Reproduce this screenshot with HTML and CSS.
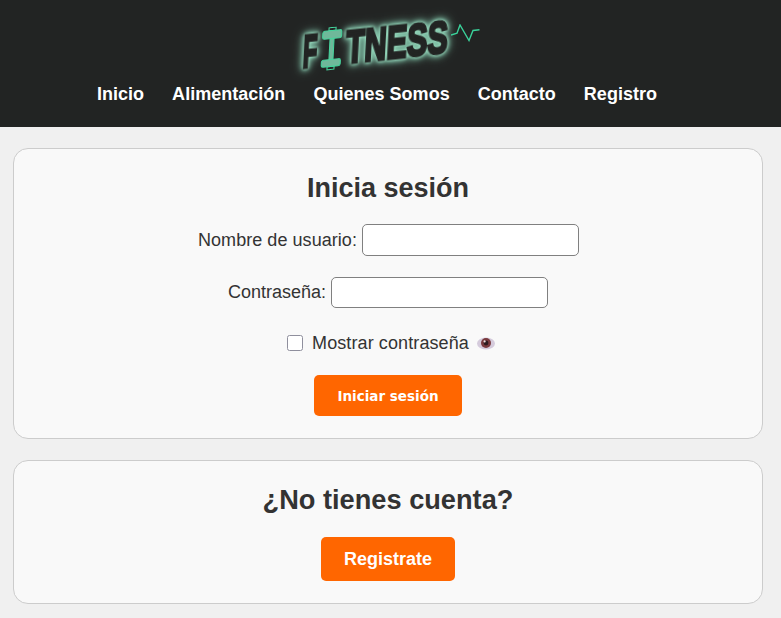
FILE: index.html
```
<!DOCTYPE html>
<html lang="es">
<head>
<meta charset="utf-8">
<title>Fitness</title>
<link rel="stylesheet" href="styles.css">
</head>
<body>
<header class="site-header">
  <div class="logo">
    <div class="logo-word">
      <div class="logo-letters">
        <span class="logo-f">F</span>
        <span class="logo-rest">TNESS</span>
      </div>
      <svg class="dumbbell" width="21" height="44" viewBox="0 0 21 44" fill="none" stroke="#45d39c" stroke-width="1.100">
        <path d="M7 .6h7v3H7z"/>
        <path d="M3 3.600h15a2 2 0 0 1 2 2v4a2 2 0 0 1-2 2H3a2 2 0 0 1-2-2v-4a2 2 0 0 1 2-2z" fill="#6fb89a"/>
        <path d="M8.500 11.600h4v21h-4z" fill="#6fb89a"/>
        <path d="M3 32.600h15a2 2 0 0 1 2 2v3a2 2 0 0 1-2 2H3a2 2 0 0 1-2-2v-3a2 2 0 0 1 2-2z" fill="#6fb89a"/>
        <path d="M7 39.600h7v3H7z"/>
      </svg>
    </div>
    <svg class="pulse" width="29" height="18" viewBox="0 0 29 18" fill="none" stroke="#3ad29a" stroke-width="1.400">
      <path d="M0 11l6-1.800L9 1l9 15.500 4-10 6.500-.7"/>
    </svg>
  </div>
  <nav class="nav">
    <a href="#">Inicio</a>
    <a href="#">Alimentación</a>
    <a href="#">Quienes Somos</a>
    <a href="#">Contacto</a>
    <a href="#">Registro</a>
  </nav>
</header>
<main class="content">
  <section class="card card-login">
    <h2>Inicia sesión</h2>
    <form class="form">
      <div class="field field-user"><label for="u">Nombre de usuario:</label><input id="u" type="text"></div>
      <div class="field field-pass"><label for="p">Contraseña:</label><input id="p" type="password"></div>
      <div class="show"><input id="s" type="checkbox"><label for="s">Mostrar contraseña</label>
        <svg class="eye" width="18" height="13" viewBox="0 0 18 13">
          <ellipse cx="9" cy="6.500" rx="9" ry="6" fill="#d5cbdc"/>
          <circle cx="9" cy="6" r="5" fill="#7a3a3e"/>
          <circle cx="9" cy="6" r="2.400" fill="#2e1b20"/>
          <circle cx="7.600" cy="4.400" r="1.100" fill="#eddfe0"/>
        </svg>
      </div>
      <button class="btn btn-login" type="button">Iniciar sesión</button>
    </form>
  </section>
  <section class="card card-register">
    <h2>¿No tienes cuenta?</h2>
    <a class="btn btn-register" href="#">Registrate</a>
  </section>
</main>
</body>
</html>
```
FILE: styles.css
```
* { box-sizing: border-box; }
html, body { margin: 0; padding: 0; }
body {
  background: #f0f0f0;
  color: #333;
  font-family: "Liberation Sans", Arial, sans-serif;
  height: 618px;
  overflow: hidden;
}
.site-header {
  background: #222423;
  height: 127px;
  display: flex;
  flex-direction: column;
  align-items: center;
}
.logo {
  position: relative;
  width: 190px;
  height: 72px;
  flex: none;
}
.logo-word {
  position: absolute;
  left: 7px;
  top: 22px;
  width: 150px;
  height: 44px;
  transform: skew(-3deg, -6deg);
}
.logo-letters {
  display: flex;
  align-items: center;
  height: 44px;
  color: #222423;
  font-weight: 700;
  font-size: 47px;
  line-height: 44px;
  filter: drop-shadow(0 0 1.500px #9fe0c4) drop-shadow(0 0 2.500px #8fd6b8) drop-shadow(0 0 4px #6fa892);
}
.logo-f, .logo-rest {
  display: inline-block;
  transform-origin: left center;
  -webkit-text-stroke: 3px #222423;
}
.logo-f { width: 43px; transform: scaleX(.5); }
.logo-rest { width: 106px; transform: scaleX(.65); }
.dumbbell { position: absolute; left: 18px; top: 0; }
.pulse { position: absolute; left: 155px; top: 24px; }
.nav {
  display: flex;
  gap: 28px;
  margin-top: 12px;
  margin-left: -27px;
}
.nav a {
  color: #fff;
  text-decoration: none;
  font-weight: 700;
  font-size: 18px;
  line-height: 21px;
  letter-spacing: .02px;
}
.content {
  padding: 21px 18px 0 13px;
  display: flex;
  flex-direction: column;
  gap: 21px;
}
.card {
  background: #f9f9f9;
  border: 1px solid #ccc;
  border-radius: 15px;
  text-align: center;
}
.card-login { height: 291px; padding-top: 24px; }
.card-register { height: 144px; padding-top: 23px; }
h2 { margin: 0; font-weight: 700; color: #333; }
.card-login h2 { font-size: 27px; line-height: 31px; }
.card-register h2 { font-size: 27.200px; line-height: 31px; }
.form { display: flex; flex-direction: column; align-items: center; }
.field { display: flex; align-items: center; gap: 5px; font-size: 18px; height: 32px; }
.field-user { margin-top: 20px; margin-left: 1px; letter-spacing: .05px; }
.field-pass { margin-top: 20px; }
.field input {
  width: 217px;
  height: 32px;
  border: 1px solid #808080;
  border-radius: 5px;
  background: #fff;
  padding: 0 5px;
}
.field-pass input { height: 31px; }
.show { display: flex; align-items: center; font-size: 18px; margin: 24px 0 0 6px; height: 22px; letter-spacing: .1px; }
.show input {
  appearance: none;
  width: 16px;
  height: 16px;
  margin: 0 9px 0 0;
  border: 1px solid #8f8f9d;
  border-radius: 2.500px;
  background: #fff;
}
.eye { margin-left: 8px; }
.btn {
  display: flex;
  align-items: center;
  justify-content: center;
  background: #f60;
  color: #fff;
  border: 0;
  border-radius: 5px;
  font-weight: 700;
  text-decoration: none;
}
.btn-login {
  width: 148px;
  height: 41px;
  margin-top: 21px;
  font-family: "DejaVu Sans", sans-serif;
  font-size: 13.500px;
}
.btn-register {
  width: 134px;
  height: 44px;
  margin: 22px auto 0;
  font-size: 18px;
}
```
